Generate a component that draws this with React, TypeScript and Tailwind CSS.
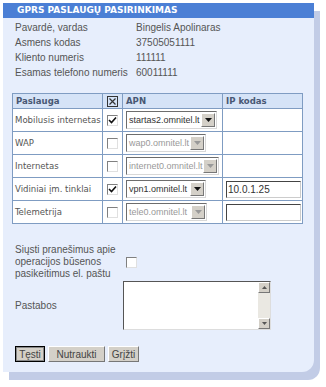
const info = [
  ["Pavardė, vardas", "Bingelis Apolinaras"],
  ["Asmens kodas", "37505051111"],
  ["Kliento numeris", "111111"],
  ["Esamas telefono numeris", "60011111"],
];

const rows = [
  { name: "Mobilusis internetas", checked: true, apn: "startas2.omnitel.lt", w: 91, ip: null },
  { name: "WAP", checked: false, apn: "wap0.omnitel.lt", w: 80, ip: null },
  { name: "Internetas", checked: false, apn: "internet0.omnitel.lt", w: 93, ip: null },
  { name: "Vidiniai įm. tinklai", checked: true, apn: "vpn1.omnitel.lt", w: 80, ip: "10.0.1.25" },
  { name: "Telemetrija", checked: false, apn: "tele0.omnitel.lt", w: 81, ip: "" },
];

function Check({ checked }: { checked: boolean }) {
  return (
    <div className="w-[11px] h-[11px] bg-white border border-t-[#808080] border-l-[#808080] border-r-[#e0e0e0] border-b-[#e0e0e0] flex items-center justify-center">
      {checked && (
        <svg width="9" height="9" viewBox="0 0 9 9">
          <path d="M1 4 L3.5 6.5 L8 1.5" stroke="#111" strokeWidth="1.6" fill="none" />
        </svg>
      )}
    </div>
  );
}

function Select({ value, enabled, w }: { value: string; enabled: boolean; w: number }) {
  return (
    <div className="flex items-center h-[18px] bg-white border border-t-[#6d6d6d] border-l-[#6d6d6d] border-r-[#d8d8d8] border-b-[#d8d8d8]" style={{ width: w }}>
      <span
        className={`flex-1 min-w-0 whitespace-nowrap pl-[2px] text-[9px] ${enabled ? "text-[#333]" : "text-[#999]"}`}
        style={{ fontFamily: "'Liberation Sans', Arial, sans-serif" }}
      >
        {value}
      </span>
      <div className="shrink-0 w-[14px] h-[14px] mr-[1px] bg-[#d4d0c8] border border-t-white border-l-white border-r-[#777] border-b-[#777] flex items-center justify-center">
        <svg width="7" height="4" viewBox="0 0 7 4">
          <path d="M0 0 L7 0 L3.5 4 Z" fill={enabled ? "#111" : "#999"} />
        </svg>
      </div>
    </div>
  );
}

export default function App() {
  return (
    <div className="w-[326px] h-[387px] bg-white pt-[3px] pl-[3px]" style={{ fontFamily: "'Liberation Sans', Arial, sans-serif" }}>
      <div className="w-[311px] h-[369px] bg-[#e7eefc] rounded-br-[12px] shadow-[6px_8px_0_#c2cce6]">
        <div className="h-[15px] bg-[#4b7fd5] pl-[14px] text-[9px] font-bold text-white leading-[15px]" style={{ fontFamily: "'DejaVu Sans', Tahoma, sans-serif" }}>
          GPRS PASLAUGŲ PASIRINKIMAS
        </div>
        <div className="pl-[12px] pt-[2px] text-[10px] text-[#555]">
          {info.map(([k, v]) => (
            <div key={k} className="flex h-[15px] leading-[15px] whitespace-nowrap">
              <div className="w-[121px]">{k}</div>
              <div>{v}</div>
            </div>
          ))}
        </div>
        <div className="ml-[9px] mt-[13px] w-[291px]" style={{ fontFamily: "'DejaVu Sans Condensed', 'DejaVu Sans', Verdana, sans-serif" }}>
          <table className="w-full table-fixed border-collapse border border-[#7f9cc2] text-[9.5px] text-[#555]">
            <colgroup>
              <col className="w-[90px]" />
              <col className="w-[20px]" />
              <col className="w-[100px]" />
              <col />
            </colgroup>
            <thead>
              <tr className="h-[15px] bg-[#d5e3f7] text-[#485874]">
                <th className="border border-[#7f9cc2] text-left font-bold pl-[3px]">Paslauga</th>
                <th className="border border-[#7f9cc2]">
                  <div className="flex justify-center">
                    <svg width="11" height="11" viewBox="0 0 11 11">
                      <rect x="0.5" y="0.5" width="10" height="10" fill="none" stroke="#333" />
                      <path d="M2.5 2.5 L8.5 8.5 M8.5 2.5 L2.5 8.5" stroke="#333" strokeWidth="1.2" />
                    </svg>
                  </div>
                </th>
                <th className="border border-[#7f9cc2] text-left font-bold pl-[3px]">APN</th>
                <th className="border border-[#7f9cc2] text-left font-bold pl-[3px]">IP kodas</th>
              </tr>
            </thead>
            <tbody className="bg-white">
              {rows.map((r) => (
                <tr key={r.name} className="h-[23px]">
                  <td className="border border-[#7f9cc2] pl-[2px] whitespace-nowrap overflow-hidden">{r.name}</td>
                  <td className="border border-[#7f9cc2]">
                    <div className="flex justify-center">
                      <Check checked={r.checked} />
                    </div>
                  </td>
                  <td className="border border-[#7f9cc2] pl-[3px]">
                    <Select value={r.apn} enabled={r.checked} w={r.w} />
                  </td>
                  <td className="border border-[#7f9cc2] pl-[3px]">
                    {r.ip !== null && (
                      <div className="w-[75px] h-[17px] bg-white border border-t-[#444] border-l-[#444] border-r-[#ccc] border-b-[#ccc] text-[10px] text-[#333] pl-[1px] leading-[15px]" style={{ fontFamily: "'Liberation Sans', Arial, sans-serif" }}>
                        {r.ip}
                      </div>
                    )}
                  </td>
                </tr>
              ))}
            </tbody>
          </table>
        </div>
        <div className="flex items-center pl-[12px] mt-[20px] text-[10px] text-[#555] leading-[12px]">
          <div className="w-[111px]">
            Siųsti pranešimus apie
            <br />
            operacijos būsenos
            <br />
            pasikeitimus el. paštu
          </div>
          <Check checked={false} />
        </div>
        <div className="flex items-center pl-[12px] mt-[1px] text-[10px] text-[#555]">
          <div className="w-[108px]">Pastabos</div>
          <div className="flex w-[148px] h-[49px] bg-white border border-t-[#555] border-l-[#555] border-r-[#ddd] border-b-[#ddd]">
            <div className="flex-1" />
            <div className="w-[12px] bg-[#eae8e2] flex flex-col justify-between">
              <div className="h-[11px] bg-[#d4d0c8] border border-t-white border-l-white border-r-[#777] border-b-[#777] flex items-center justify-center">
                <svg width="5" height="3" viewBox="0 0 5 3"><path d="M0 3 L5 3 L2.5 0 Z" fill="#555" /></svg>
              </div>
              <div className="h-[11px] bg-[#d4d0c8] border border-t-white border-l-white border-r-[#777] border-b-[#777] flex items-center justify-center">
                <svg width="5" height="3" viewBox="0 0 5 3"><path d="M0 0 L5 0 L2.5 3 Z" fill="#555" /></svg>
              </div>
            </div>
          </div>
        </div>
        <div className="flex gap-[3px] pl-[12px] mt-[16px] text-[10px] text-[#444]">
          <div className="h-[16px] w-[30px] bg-[#d4d0c8] border border-black outline outline-1 outline-[#888] -outline-offset-2 flex items-center justify-center">Tęsti</div>
          <div className="h-[16px] w-[57px] bg-[#d4d0c8] border border-t-white border-l-white border-r-[#777] border-b-[#777] flex items-center justify-center">Nutraukti</div>
          <div className="h-[16px] w-[31px] bg-[#d4d0c8] border border-t-white border-l-white border-r-[#777] border-b-[#777] flex items-center justify-center">Grįžti</div>
        </div>
      </div>
    </div>
  );
}
